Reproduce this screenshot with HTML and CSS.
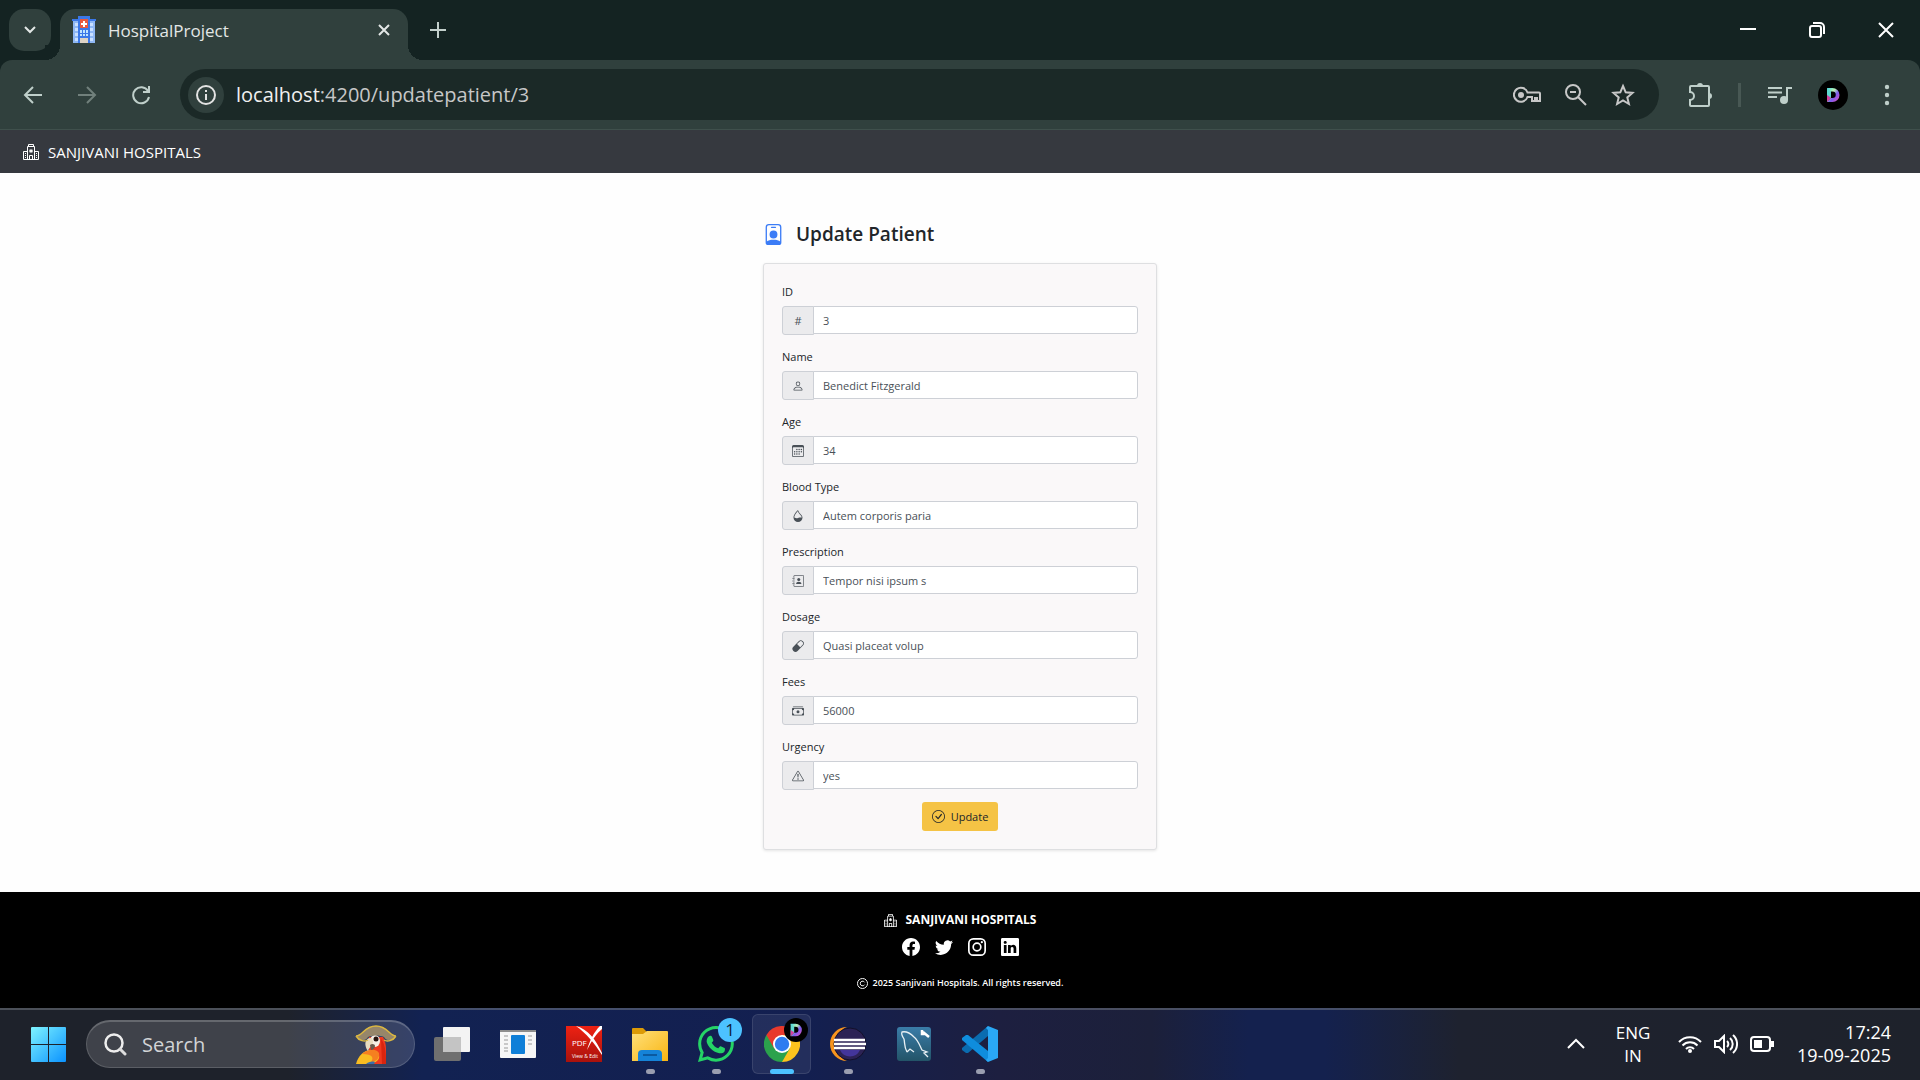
FILE: index.html
```html
<!DOCTYPE html>
<html lang="en">
<head>
<meta charset="utf-8">
<title>HospitalProject</title>
<link rel="stylesheet" href="styles.css">
</head>
<body>
<svg class="defs" aria-hidden="true">
  <symbol id="hospital" viewBox="0 0 16 16"><path d="M8.5 5.034v1.1l.953-.55.5.867L9 7l.953.55-.5.866-.953-.55v1.1h-1v-1.1l-.953.55-.5-.866L7 7l-.953-.55.5-.866.953.55v-1.1zM13 9h1v1h-1zM13 11h1v1h-1zM13 13h1v1h-1zM2 9h1v1H2zM2 11h1v1H2zM2 13h1v1H2z"/><path d="M5 1a1 1 0 0 1 1-1h4a1 1 0 0 1 1 1v1a1 1 0 0 1 1 1v4h3a1 1 0 0 1 1 1v7a1 1 0 0 1-1 1H1a1 1 0 0 1-1-1V8a1 1 0 0 1 1-1h3V3a1 1 0 0 1 1-1zm2 14h2v-3H7zm3 0h1V3H5v12h1v-3a1 1 0 0 1 1-1h2a1 1 0 0 1 1 1zm0-14H6v1h4zm2 7v7h3V8zm-8 7V8H1v7z"/></symbol>
  <symbol id="d-logo" viewBox="0 0 20 20">
    <linearGradient id="dg" x1="0" y1="0" x2="1" y2="1"><stop offset="0" stop-color="#3fd6e8"/><stop offset=".35" stop-color="#b9f0b0"/><stop offset=".6" stop-color="#7a5cf0"/><stop offset="1" stop-color="#f04fb0"/></linearGradient>
    <path d="M4 3h5.500a7 7 0 0 1 0 14H4l4-4h1.500a3 3 0 0 0 0-6.500H8L6 10z" fill="url(#dg)"/><path d="M4 3l4 3.500V13l-4 4z" fill="#5fd8d0"/><path d="M4 10l3 2 1 1-4 4z" fill="#d63fa0"/>
  </symbol>
</svg>

<header class="browser">
  <div class="tabstrip">
    <button class="tab-search" aria-label="Search tabs"><svg width="14" height="14" viewBox="0 0 14 14"><path class="line" d="M2 4l5 5 5-5"/></svg></button>
    <div class="tab">
      <svg width="24" height="28" viewBox="0 0 24 28"><path fill="#8fb8f5" d="M1 4h22v23H1z"/><path fill="#c9e0ff" d="M3 7h3v3H3zM3 12h3v3H3zM3 17h3v3H3zM3 22h3v3H3zM18 7h3v3h-3zM18 12h3v3h-3zM18 17h3v3h-3zM18 22h3v3h-3z"/><path fill="#3b78e8" d="M6 0h12v27H6zM0 3h24v2H0z"/><path fill="#e8593f" d="M8 3h8v9H8z"/><path fill="#fff" d="M11 5h2v2h2v2h-2v2h-2V9H9V7h2z"/><path fill="#bfe3ff" d="M8 14h2v3H8zM11 14h2v3h-2zM14 14h2v3h-2zM8 18h2v2H8zM11 18h2v2h-2zM14 18h2v2h-2z"/><path fill="#ddd3c5" d="M8 22h8v5H8z"/></svg>
      <span class="tab-title">HospitalProject</span>
      <button class="icon-btn" aria-label="Close tab"><svg width="14" height="14" viewBox="0 0 14 14"><path class="line" d="M2 2l10 10M12 2L2 12"/></svg></button>
    </div>
    <button class="icon-btn new-tab" aria-label="New tab"><svg width="16" height="16" viewBox="0 0 16 16"><path class="line" d="M8 0v16M0 8h16"/></svg></button>
    <div class="window-controls">
      <button class="icon-btn" aria-label="Minimize"><svg width="16" height="16" viewBox="0 0 16 16"><path class="line" d="M0 7h16"/></svg></button>
      <button class="icon-btn" aria-label="Restore"><svg width="16" height="16" viewBox="0 0 16 16"><rect class="line" x="1" y="4" width="11" height="11" rx="2"/><path class="line" d="M4 1h7a4 4 0 0 1 4 4v7"/></svg></button>
      <button class="icon-btn" aria-label="Close"><svg width="16" height="16" viewBox="0 0 16 16"><path class="line" d="M1 1l14 14M15 1L1 15"/></svg></button>
    </div>
  </div>
  <div class="toolbar">
    <button class="icon-btn nav" aria-label="Back"><svg width="20" height="20" viewBox="0 0 20 20"><path class="line" d="M19 10H2M10 2l-8 8 8 8"/></svg></button>
    <button class="icon-btn nav dim" aria-label="Forward"><svg width="20" height="20" viewBox="0 0 20 20"><path class="line" d="M1 10h17M10 2l8 8-8 8"/></svg></button>
    <button class="icon-btn nav" aria-label="Reload"><svg width="20" height="20" viewBox="0 0 20 20"><path class="line" d="M17 6a8 8 0 1 0 1 6M18 1v6h-6"/></svg></button>
    <div class="address">
      <button class="icon-btn info" aria-label="Site information"><svg width="20" height="20" viewBox="0 0 20 20"><circle class="line" cx="10" cy="10" r="9"/><path class="line" d="M10 9v6M10 5v2"/></svg></button>
      <p class="url"><span>localhost</span>:4200/updatepatient/3</p>
      <button class="icon-btn" aria-label="Passwords"><svg width="28" height="18" viewBox="0 0 28 18"><path class="line" d="M14.500 6.500H26a1 1 0 0 1 1 1V15h-3v-3h-2v3h-3v-4h-4.500a7 7 0 1 1 0-4.500z"/><circle cx="8" cy="9" r="3"/></svg></button>
      <button class="icon-btn" aria-label="Zoom"><svg width="22" height="22" viewBox="0 0 22 22"><circle class="line" cx="8" cy="8" r="7"/><path class="line" d="M13 13l8 8M5 8h6"/></svg></button>
      <button class="icon-btn" aria-label="Bookmark"><svg width="24" height="24" viewBox="0 0 24 24"><path class="line" d="M12 3l2.700 6.300 6.800.6-5.200 4.500 1.600 6.600-5.900-3.500L6.100 21l1.600-6.600L2.500 9.900l6.800-.6z"/></svg></button>
    </div>
    <button class="icon-btn ext" aria-label="Extensions"><svg width="26" height="26" viewBox="0 0 26 26"><path class="line" d="M4 4h16a1 1 0 0 1 1 1v18a1 1 0 0 1-1 1H3a1 1 0 0 1-1-1v-5a4 4 0 0 0 0-8V5a1 1 0 0 1 1-1z"/><path d="M9 4a3 3 0 0 1 6 0zM21 11a3 3 0 0 1 0 6z"/></svg></button>
    <span class="divider"></span>
    <button class="icon-btn music" aria-label="Media controls"><svg width="24" height="18" viewBox="0 0 24 18"><path class="line" d="M0 2h14M0 6.500h14M0 11h9M19 14V2h5"/><circle cx="16" cy="14" r="4"/></svg></button>
    <button class="icon-btn avatar" aria-label="Profile"><svg width="20" height="20"><use href="#d-logo"/></svg></button>
    <button class="icon-btn menu" aria-label="Menu"><svg width="6" height="22" viewBox="0 0 6 22"><circle cx="3" cy="3" r="2.200"/><circle cx="3" cy="11" r="2.200"/><circle cx="3" cy="19" r="2.200"/></svg></button>
  </div>
</header>

<nav class="navbar">
  <a href="#" class="brand"><svg width="16" height="16"><use href="#hospital"/></svg>SANJIVANI HOSPITALS</a>
</nav>

<main class="page">
  <section class="panel">
    <h1 class="heading"><svg width="21" height="21" viewBox="0 0 16 16"><path d="M6.500 2a.5.5 0 0 0 0 1h3a.5.5 0 0 0 0-1zM11 8a3 3 0 1 1-6 0 3 3 0 0 1 6 0"/><path d="M4.500 0A2.500 2.500 0 0 0 2 2.500V14a2 2 0 0 0 2 2h8a2 2 0 0 0 2-2V2.500A2.500 2.500 0 0 0 11.500 0zM3 2.500A1.500 1.500 0 0 1 4.500 1h7A1.500 1.500 0 0 1 13 2.500v10.795a4.200 4.200 0 0 0-.776-.492C11.392 12.387 10.063 12 8 12s-3.392.387-4.224.803a4.200 4.200 0 0 0-.776.492z"/></svg>Update Patient</h1>
    <form class="card">
      <div class="field"><label for="id">ID</label><div class="group"><span class="addon">#</span><input id="id" type="text" value="3"></div></div>
      <div class="field"><label for="name">Name</label><div class="group"><span class="addon"><svg width="12" height="12" viewBox="0 0 16 16"><path d="M8 8a3 3 0 1 0 0-6 3 3 0 0 0 0 6m2-3a2 2 0 1 1-4 0 2 2 0 0 1 4 0m4 8c0 1-1 1-1 1H3s-1 0-1-1 1-4 6-4 6 3 6 4m-1-.004c-.001-.246-.154-.986-.832-1.664C11.516 10.680 10.289 10 8 10s-3.516.68-4.168 1.332c-.678.678-.83 1.418-.832 1.664z"/></svg></span><input id="name" type="text" value="Benedict Fitzgerald"></div></div>
      <div class="field"><label for="age">Age</label><div class="group"><span class="addon"><svg width="12" height="12" viewBox="0 0 16 16"><path d="M14 0H2a2 2 0 0 0-2 2v12a2 2 0 0 0 2 2h12a2 2 0 0 0 2-2V2a2 2 0 0 0-2-2M1 3.857C1 3.384 1.448 3 2 3h12c.552 0 1 .384 1 .857v10.286c0 .473-.448.857-1 .857H2c-.552 0-1-.384-1-.857z"/><path d="M6.500 7a1 1 0 1 0 0-2 1 1 0 0 0 0 2m3 0a1 1 0 1 0 0-2 1 1 0 0 0 0 2m3 0a1 1 0 1 0 0-2 1 1 0 0 0 0 2m-9 3a1 1 0 1 0 0-2 1 1 0 0 0 0 2m3 0a1 1 0 1 0 0-2 1 1 0 0 0 0 2m3 0a1 1 0 1 0 0-2 1 1 0 0 0 0 2m3 0a1 1 0 1 0 0-2 1 1 0 0 0 0 2m-9 3a1 1 0 1 0 0-2 1 1 0 0 0 0 2m3 0a1 1 0 1 0 0-2 1 1 0 0 0 0 2m3 0a1 1 0 1 0 0-2 1 1 0 0 0 0 2"/></svg></span><input id="age" type="text" value="34"></div></div>
      <div class="field"><label for="blood">Blood Type</label><div class="group"><span class="addon"><svg width="12" height="12" viewBox="0 0 16 16"><path fill-rule="evenodd" d="M7.210.8C7.690.295 8 0 8 0q.164.544.371 1.038c.812 1.946 2.073 3.350 3.197 4.600C12.878 7.096 14 8.345 14 10a6 6 0 0 1-12 0C2 6.668 5.580 2.517 7.210.8m.413 1.021A31 31 0 0 0 5.794 3.990c-.726.95-1.436 2.008-1.960 3.070C3.304 8.133 3 9.138 3 10c0 0 2.500 1.500 5 .5s5-.5 5-.5c0-1.201-.796-2.157-2.181-3.700l-.03-.032C9.750 5.110 8.500 3.720 7.623 1.820z"/></svg></span><input id="blood" type="text" value="Autem corporis paria"></div></div>
      <div class="field"><label for="rx">Prescription</label><div class="group"><span class="addon"><svg width="12" height="12" viewBox="0 0 16 16"><path fill="none" stroke="currentColor" d="M2.500 3.500v-2a1 1 0 0 1 1-1h11a1 1 0 0 1 1 1v13a1 1 0 0 1-1 1h-11a1 1 0 0 1-1-1v-2M2.500 5.500v1M2.500 9.500v1M.5 4.500h3M.5 8h3M.5 11.500h3"/><circle cx="9" cy="6" r="2"/><path d="M5.500 12c0-2 1.500-3 3.500-3s3.500 1 3.500 3z"/></svg></span><input id="rx" type="text" value="Tempor nisi ipsum s"></div></div>
      <div class="field"><label for="dose">Dosage</label><div class="group"><span class="addon"><svg width="12" height="12" viewBox="0 0 16 16"><path d="M1.828 8.900 8.900 1.827a4 4 0 1 1 5.657 5.657l-7.070 7.071A4 4 0 1 1 1.827 8.900Zm9.128.771 2.893-2.893a3 3 0 1 0-4.243-4.242L6.713 5.429z"/></svg></span><input id="dose" type="text" value="Quasi placeat volup"></div></div>
      <div class="field"><label for="fees">Fees</label><div class="group"><span class="addon"><svg width="12" height="12" viewBox="0 0 16 16"><path d="M1 3a1 1 0 0 1 1-1h12a1 1 0 0 1 1 1zm7 8a2 2 0 1 0 0-4 2 2 0 0 0 0 4"/><path d="M0 5a1 1 0 0 1 1-1h14a1 1 0 0 1 1 1v8a1 1 0 0 1-1 1H1a1 1 0 0 1-1-1zm3 0a2 2 0 0 1-2 2v4a2 2 0 0 1 2 2h10a2 2 0 0 1 2-2V7a2 2 0 0 1-2-2z"/></svg></span><input id="fees" type="text" value="56000"></div></div>
      <div class="field"><label for="urgency">Urgency</label><div class="group"><span class="addon"><svg width="12" height="12" viewBox="0 0 16 16"><path d="M7.938 2.016A.13.13 0 0 1 8.002 2a.13.13 0 0 1 .063.016.15.15 0 0 1 .054.057l6.857 11.667c.036.06.035.124.002.183a.2.2 0 0 1-.054.06.1.1 0 0 1-.066.017H1.146a.1.1 0 0 1-.066-.017.2.2 0 0 1-.054-.06.18.18 0 0 1 .002-.183L7.884 2.073a.15.15 0 0 1 .054-.057m1.044-.45a1.130 1.130 0 0 0-1.960 0L.165 13.233c-.457.778.091 1.767.98 1.767h13.713c.889 0 1.438-.99.98-1.767z"/><path d="M7.002 12a1 1 0 1 1 2 0 1 1 0 0 1-2 0M7.100 5.995a.905.905 0 1 1 1.800 0l-.35 3.507a.552.552 0 0 1-1.100 0z"/></svg></span><input id="urgency" type="text" value="yes"></div></div>
      <button class="submit" type="button"><svg width="13" height="13" viewBox="0 0 16 16"><path d="M8 15A7 7 0 1 1 8 1a7 7 0 0 1 0 14m0 1A8 8 0 1 0 8 0a8 8 0 0 0 0 16"/><path d="m10.970 4.970-.02.022-3.473 4.425-2.093-2.094a.75.75 0 0 0-1.060 1.060L6.970 11.030a.75.75 0 0 0 1.079-.02l3.992-4.990a.75.75 0 0 0-1.071-1.050"/></svg>Update</button>
    </form>
  </section>
</main>

<footer class="footer">
  <p class="footer-title"><svg width="13" height="13"><use href="#hospital"/></svg>SANJIVANI HOSPITALS</p>
  <div class="social">
    <a href="#" aria-label="Facebook"><svg width="18" height="18" viewBox="0 0 16 16"><path d="M16 8.049c0-4.446-3.582-8.050-8-8.050C3.580 0-.002 3.603-.002 8.050c0 4.017 2.926 7.347 6.750 7.951v-5.625h-2.030V8.050H6.750V6.275c0-2.017 1.195-3.131 3.022-3.131.876 0 1.791.157 1.791.157v1.980h-1.009c-.993 0-1.303.621-1.303 1.258v1.510h2.218l-.354 2.326H9.250V16c3.824-.604 6.750-3.934 6.750-7.951"/></svg></a>
    <a href="#" aria-label="Twitter"><svg width="18" height="18" viewBox="0 0 16 16"><path d="M5.026 15c6.038 0 9.341-5.003 9.341-9.334q.002-.211-.006-.422A6.700 6.700 0 0 0 16 3.542a6.700 6.700 0 0 1-1.889.518 3.300 3.300 0 0 0 1.447-1.817 6.500 6.500 0 0 1-2.087.793A3.286 3.286 0 0 0 7.875 6.030a9.320 9.320 0 0 1-6.767-3.429 3.290 3.290 0 0 0 1.018 4.382A3.300 3.300 0 0 1 .64 6.575v.045a3.290 3.290 0 0 0 2.632 3.218 3.200 3.200 0 0 1-.865.115 3 3 0 0 1-.614-.057 3.280 3.280 0 0 0 3.067 2.277A6.600 6.600 0 0 1 .78 13.580a6 6 0 0 1-.78-.045A9.340 9.340 0 0 0 5.026 15"/></svg></a>
    <a href="#" aria-label="Instagram"><svg width="18" height="18" viewBox="0 0 16 16"><rect x=".75" y=".75" width="14.500" height="14.500" rx="4" fill="none" stroke="currentColor" stroke-width="1.500"/><circle cx="8" cy="8" r="3.400" fill="none" stroke="currentColor" stroke-width="1.500"/><circle cx="12.300" cy="3.700" r="1"/></svg></a>
    <a href="#" aria-label="LinkedIn"><svg width="18" height="18" viewBox="0 0 16 16"><path d="M0 1.146C0 .513.526 0 1.175 0h13.650C15.474 0 16 .513 16 1.146v13.708c0 .633-.526 1.146-1.175 1.146H1.175C.526 16 0 15.487 0 14.854zm4.943 12.248V6.169H2.542v7.225zm-1.200-8.212c.837 0 1.358-.554 1.358-1.248-.015-.709-.52-1.248-1.342-1.248S2.400 3.226 2.400 3.934c0 .694.521 1.248 1.327 1.248zm4.908 8.212V9.359c0-.216.016-.432.08-.586.173-.431.568-.878 1.232-.878.869 0 1.216.662 1.216 1.634v3.865h2.401V9.250c0-2.220-1.184-3.252-2.764-3.252-1.274 0-1.845.7-2.165 1.193V6.169h-2.400c.03.678 0 7.225 0 7.225z"/></svg></a>
  </div>
  <p class="copyright"><svg width="11" height="11" viewBox="0 0 16 16"><circle cx="8" cy="8" r="7.300" fill="none" stroke="currentColor" stroke-width="1.400"/><path fill="none" stroke="currentColor" stroke-width="1.400" d="M11 6.300A3.300 3.300 0 0 0 4.800 8a3.300 3.300 0 0 0 6.200 1.700"/></svg>2025 Sanjivani Hospitals. All rights reserved.</p>
</footer>

<div class="taskbar">
  <button class="start" aria-label="Start"><svg width="35" height="35" viewBox="0 0 35 35"><linearGradient id="wg" x1="0" y1="0" x2="35" y2="35" gradientUnits="userSpaceOnUse"><stop offset="0" stop-color="#7ff4ff"/><stop offset="1" stop-color="#0a92ff"/></linearGradient><path fill="url(#wg)" d="M1 0h16v17H0V1a1 1 0 0 1 1-1zM18 0h16a1 1 0 0 1 1 1v16H18zM0 18h17v17H1a1 1 0 0 1-1-1zM18 18h17v16a1 1 0 0 1-1 1H18z"/></svg></button>
  <button class="search">
    <svg width="23" height="23" viewBox="0 0 23 23"><circle cx="10" cy="10" r="8.500" fill="none" stroke="#eee" stroke-width="2.500"/><path d="M16 16l5 5" stroke="#ddd" stroke-width="3" stroke-linecap="round"/></svg>
    <span>Search</span>
    <svg width="42" height="40" viewBox="0 0 42 40"><path fill="#ee3a1f" d="M14 12h14c2 3 3 8 3 12v15H14V28z"/><path fill="#d8250f" d="M26 14c4 5 5 12 5 25h-4z"/><path fill="#f9bd22" d="M1 39c2-8 8-14 15-14 6 0 9 4 8 8-2 5-7 6-14 6z"/><path fill="#f58020" d="M7 29c5-5 14-6 17-1 1 5-3 9-8 9 3-4 2-8-9-8z"/><path fill="#3b6fa8" d="M11 39c2-2 6-3 9-2l-1 2z"/><ellipse cx="20" cy="16" rx="5" ry="6" fill="#f6eee4"/><circle cx="21" cy="14" r="2.500" fill="#26130f"/><path fill="#e9dcc0" d="M17 13c-8-1-8 8-4 13 1-4 5-5 5-9z"/><path fill="#6b5a4c" d="M15 20c2-2 5-1 5 1 0 2-2 4-4 4z"/><path fill="#96866a" d="M1 11c7 0 8-10 20-10s13 10 20 10c-3 5-9 6-12 1-4-2-12-2-16 0-3 5-9 4-12-1z"/><path fill="none" stroke="#dcb840" stroke-width="1.500" d="M1 11c7 0 8-10 20-10s13 10 20 10M1 11c3 5 9 6 12 4M41 11c-3 5-9 6-12 4"/></svg>
  </button>
  <div class="apps">
    <button class="app" aria-label="Task view"><svg width="36" height="36" viewBox="0 0 36 36"><rect y="11" width="27" height="24" rx="2" fill="#6f6f6f"/><rect x="9" y="1" width="27" height="25" rx="1" fill="#f3f3f3"/><path fill="#c4c4c4" d="M9 11h18v15H9z"/></svg></button>
    <button class="app" aria-label="Reader"><svg width="36" height="36" viewBox="0 0 36 36"><rect y="4" width="36" height="28" rx="1" fill="#f6f6f6"/><path fill="#8d8d8d" d="M0 4h36v2H0z"/><rect x="11" y="9" width="14" height="19" rx="1" fill="#0f7fd8"/><path stroke="#c8c8c8" stroke-width="2" d="M4 10h4M4 14h4M4 18h4M4 22h4M4 25h4M28 10h4M28 14h4M28 18h4"/></svg></button>
    <button class="app" aria-label="PDF X"><svg width="36" height="36" viewBox="0 0 36 36"><linearGradient id="pg" x2="0" y2="1"><stop offset="0" stop-color="#ee2213"/><stop offset="1" stop-color="#a9120c"/></linearGradient><path fill="url(#pg)" d="M0 0h36v36H0z"/><path fill="#fff" d="M10 0c12 3 20 14 26 27v2C29 18 20 7 10 0zM34 0h2v3C31 7 26 14 21 24 24 14 28 6 34 0z"/><text x="6" y="20" font-size="8" fill="#fff">PDF</text><text x="6" y="32" font-size="5" fill="#fff">View &amp; Edit</text></svg></button>
    <button class="app open" aria-label="File Explorer"><svg width="36" height="36" viewBox="0 0 36 36"><linearGradient id="fg" x2="1" y2="1"><stop offset="0" stop-color="#ffe07a"/><stop offset="1" stop-color="#f9b512"/></linearGradient><path fill="#dc9a06" d="M0 3a1 1 0 0 1 1-1h10l4 4v6H0z"/><path fill="url(#fg)" d="M0 8h11l4-3h20a1 1 0 0 1 1 1v29H0z"/><path fill="#1583d8" d="M6 35v-7a4 4 0 0 1 4-4h16a4 4 0 0 1 4 4v7z"/><path stroke="#0b5aa0" stroke-width="2" d="M11 29h14"/></svg></button>
    <button class="app open" aria-label="WhatsApp"><svg width="36" height="36" viewBox="0 0 16 16"><path fill="#25d366" fill-rule="evenodd" d="M13.601 2.326A7.850 7.850 0 0 0 7.994 0C3.627 0 .068 3.558.064 7.926c0 1.399.366 2.760 1.057 3.965L0 16l4.204-1.102a7.900 7.900 0 0 0 3.790.965h.004c4.368 0 7.926-3.558 7.930-7.930A7.900 7.900 0 0 0 13.600 2.326zM7.994 14.521a6.600 6.600 0 0 1-3.356-.92l-.24-.144-2.494.654.666-2.433-.156-.251a6.560 6.560 0 0 1-1.007-3.505c0-3.626 2.957-6.584 6.591-6.584a6.560 6.560 0 0 1 4.660 1.931 6.560 6.560 0 0 1 1.928 4.660c-.004 3.639-2.961 6.592-6.592 6.592"/><path fill="#25d366" d="M5.500 4.300c.4 0 .5.100.7.500l.6 1.400c.1.300-.2.700-.7 1.200.7 1.200 1.600 2 2.900 2.500.6-.7.700-1 1.100-.9l1.700.8c.3.200.2 1.100-.1 1.600-.5.600-1.400.9-2.300.7-2.700-.6-4.900-2.700-5.500-4.900-.2-1.200.5-2.900 1.600-2.900z"/></svg><span class="badge">1</span></button>
    <button class="app open active" aria-label="Chrome"><svg width="36" height="36" viewBox="0 0 36 36"><path fill="#e8392c" d="M2.400 9a18 18 0 0 1 31.200 0L18 18z"/><path fill="#fcc31e" d="M33.600 9A18 18 0 0 1 18 36l0-18 0-9z"/><path fill="#2ba24c" d="M2.400 9A18 18 0 0 0 18 36l7.800-13.500L18 18z"/><path fill="#e8392c" d="M2.400 9l7.800 13.500L18 9h15.600L18 5z"/><circle cx="18" cy="18" r="9" fill="#fff"/><circle cx="18" cy="18" r="7.200" fill="#2f7cf0"/></svg><span class="profile"><svg width="18" height="18"><use href="#d-logo"/></svg></span></button>
    <button class="app open" aria-label="Eclipse"><svg width="36" height="36" viewBox="0 0 36 36"><path fill="#f8941e" d="M17 1a17 17 0 0 0 0 34C4 31 4 5 17 1z"/><circle cx="20" cy="18" r="16" fill="#2c2255" stroke="#12102a"/><path fill="#43359a" d="M10 24h20a11 11 0 0 1-20 0z"/><path stroke="#fff" stroke-width="2.400" d="M4 14h31M4 18h32M4 22h31"/></svg></button>
    <button class="app" aria-label="MySQL Workbench"><svg width="36" height="36" viewBox="0 0 36 36"><linearGradient id="mg" x2="0" y2="1"><stop offset="0" stop-color="#3a7ca8"/><stop offset="1" stop-color="#235468"/></linearGradient><rect x="1" y="1" width="34" height="34" rx="3" fill="url(#mg)"/><path fill="none" stroke="#e8f0f4" stroke-width="1.300" d="M11 26c-3-5-2-9-3-13-2-3-3-5-2-7 4-1 8 1 12 5 4 3 6 9 8 13l5 2-3 1 4 4M11 26l3-3 4 3"/><path stroke="#fff" stroke-width="2.500" d="M27 6l6 5M26 4v4h3"/></svg></button>
    <button class="app open" aria-label="Visual Studio Code"><svg width="36" height="36" viewBox="0 0 36 36"><path fill="#0a6cb0" d="M26 0v10L6 27l-2 0-4-3v-2z"/><path fill="#0f8ddd" d="M0 12l4-3h2l20 16v11L0 14z"/><path fill="#2aa8f5" d="M26 0l10 4v28l-10 4-2-2 2-2V4l-2-2z"/></svg></button>
  </div>
  <div class="tray">
    <button class="icon-btn chevron" aria-label="Show hidden icons"><svg width="18" height="12" viewBox="0 0 18 12"><path class="line" d="M1 10l8-8 8 8"/></svg></button>
    <button class="lang">ENG<br>IN</button>
    <button class="status" aria-label="Network, volume and battery">
      <svg width="24" height="20" viewBox="0 0 24 20"><path class="line" d="M1 8a15 15 0 0 1 22 0M4.500 11.500a10.500 10.500 0 0 1 15 0M8 15a5.500 5.500 0 0 1 8 0"/><circle cx="12" cy="17" r="2"/></svg>
      <svg width="24" height="20" viewBox="0 0 24 20"><path class="line" d="M1 7h4l5-5v16l-5-5H1zM13 7a4 4 0 0 1 0 6M16 4a8 8 0 0 1 0 12M19 1a12 12 0 0 1 0 18"/></svg>
      <svg width="24" height="20" viewBox="0 0 24 20"><rect class="line" x="1" y="3" width="19" height="14" rx="3"/><path d="M4 6h8v8H4zM21 7h3v6h-3z"/></svg>
    </button>
    <button class="clock">17:24<br>19-09-2025</button>
  </div>
</div>
</body>
</html>
```
FILE: styles.css
```css
* { box-sizing: border-box; }

body {
  margin: 0;
  min-height: 100vh;
  display: flex;
  flex-direction: column;
  background: #fefefe;
  color: #212529;
  font-family: "Open Sans", "Noto Sans", sans-serif;
  font-size: 11px;
  line-height: 20px;
}

svg { display: block; flex: none; fill: currentColor; }
.defs { position: absolute; width: 0; height: 0; }
.line { fill: none; stroke: currentColor; stroke-width: 2; }
p, h1 { margin: 0; }
button { border: 0; padding: 0; background: none; color: inherit; font: inherit; }
.icon-btn { display: flex; align-items: center; justify-content: center; }

/* Browser window */
.browser { background: #142322; color: #e3e7e6; }
.tabstrip { display: flex; height: 60px; padding: 9px 0 0 9px; }
.tab-search {
  display: flex;
  align-items: center;
  justify-content: center;
  width: 42px;
  height: 42px;
  margin-right: 9px;
  border-radius: 15px;
  background: #30403d;
}
.tab {
  position: relative;
  display: flex;
  align-items: center;
  gap: 12px;
  width: 348px;
  padding: 0 17px 9px 12px;
  border-radius: 15px 15px 0 0;
  background: #30403d;
}
.tab::before, .tab::after {
  content: "";
  position: absolute;
  bottom: 0;
  width: 15px;
  height: 15px;
}
.tab::before { right: 100%; background: radial-gradient(circle at 0 0, #142322 15px, #30403d 15px); }
.tab::after { left: 100%; background: radial-gradient(circle at 100% 0, #142322 15px, #30403d 15px); }
.tab-title { flex: 1; padding-top: 2px; font-size: 17px; line-height: 24px; }
.new-tab { width: 60px; height: 42px; color: #c3d0cc; }
.window-controls { display: flex; height: 42px; margin-left: auto; color: #fff; }
.window-controls .icon-btn { width: 69px; }

.toolbar {
  display: flex;
  align-items: center;
  height: 70px;
  padding: 0 18px 0 6px;
  border-bottom: 1px solid #3f504c;
  border-radius: 12px 12px 0 0;
  background: #30403d;
  color: #bfcfca;
}
.nav { width: 54px; height: 42px; }
.dim { color: #71807c; }
.address {
  flex: 1;
  display: flex;
  align-items: center;
  gap: 24px;
  height: 51px;
  margin-left: 12px;
  padding: 0 24px 0 8px;
  border-radius: 26px;
  background: #1b2927;
  color: #c7c7c7;
}
.info { width: 36px; height: 36px; border-radius: 50%; background: #30403d; color: #e3e3e3; }
.url { flex: 1; margin-left: -12px; font-size: 20px; line-height: 28px; }
.url span { color: #f0f0f0; }
.ext { width: 60px; margin-left: 12px; }
.divider { width: 3px; height: 24px; margin: 0 7px; background: #485854; }
.music { width: 64px; }
.avatar { width: 30px; height: 30px; margin: 0 6px; border-radius: 50%; background: #000; }
.menu { width: 30px; margin-left: 18px; }

/* Site */
.navbar { display: flex; height: 43px; padding: 0 23px; background: #36393f; }
.brand { display: flex; align-items: center; gap: 9px; color: #fff; font-size: 15px; text-decoration: none; }

.page { flex: 1; display: flex; justify-content: center; padding: 48px 24px 42px; }
.panel { width: 394px; }
.heading {
  display: flex;
  align-items: center;
  gap: 12px;
  margin-bottom: 16px;
  font-size: 19px;
  font-weight: 600;
  line-height: 26px;
}
.heading svg { color: #3b7cf6; }
.card {
  padding: 18px;
  border: 1px solid #dedfe1;
  border-radius: 3px;
  background: #faf8f9;
  box-shadow: 0 1px 3px rgba(0, 0, 0, .1);
}
.field { display: flex; flex-direction: column; gap: 4px; margin-bottom: 12px; }
.group { display: flex; align-items: flex-start; color: #495057; }
.addon {
  display: flex;
  align-items: center;
  justify-content: center;
  width: 32px;
  height: 29px;
  border: 1px solid #cdd0d6;
  border-radius: 3px 0 0 3px;
  background: #ebebed;
}
.group input {
  flex: 1;
  min-width: 0;
  height: 28px;
  margin-left: -1px;
  padding: 0 9px;
  border: 1px solid #cdd0d6;
  border-radius: 0 3px 3px 0;
  background: #fff;
  color: inherit;
  font: inherit;
}
.submit {
  display: flex;
  align-items: center;
  gap: 6px;
  height: 29px;
  margin: 0 auto;
  padding: 0 10px;
  border-radius: 3px;
  background: #f5c345;
}

.footer {
  display: flex;
  flex-direction: column;
  align-items: center;
  height: 116px;
  padding-top: 18px;
  background: #000;
  color: #fff;
}
.footer-title, .copyright { display: flex; align-items: center; }
.footer-title { gap: 9px; font-size: 12px; font-weight: 700; }
.social { display: flex; gap: 15px; margin: 8px 0 17px; }
.social a { color: inherit; }
.copyright { gap: 5px; font-size: 9px; font-weight: 600; }

/* Taskbar */
.taskbar {
  display: flex;
  align-items: center;
  height: 72px;
  padding: 0 29px 2px 31px;
  border-top: 2px solid rgba(120, 125, 135, .5);
  background: linear-gradient(90deg, #1e222b 0, #1e222b 15%, #122252 22%, #131f50 42%, #1d1f40 52%, #1c203a 60%, #14214e 65%, #14214e 69%, #1e222f 76%, #1e222b 100%);
  background-origin: border-box;
  color: #fff;
}
.start { margin-right: 20px; }
.search {
  display: flex;
  align-items: center;
  gap: 15px;
  width: 329px;
  height: 48px;
  padding: 0 17px;
  border: 1px solid rgba(255, 255, 255, .15);
  border-top: 2px solid rgba(255, 255, 255, .2);
  border-radius: 24px;
  background: rgba(255, 255, 255, .15);
  color: #d2d4d6;
  font-size: 20px;
  line-height: 28px;
  text-align: left;
}
.search span { flex: 1; }
.apps { display: flex; margin-left: 4px; }
.app {
  position: relative;
  display: flex;
  align-items: center;
  justify-content: center;
  width: 66px;
  height: 60px;
}
.open::after {
  content: "";
  position: absolute;
  left: 50%;
  bottom: 0;
  width: 9px;
  height: 5px;
  margin-left: -4px;
  border-radius: 3px;
  background: #9a9eb0;
}
.active::after { width: 24px; margin-left: -12px; background: #4cc2ff; }
.active::before {
  content: "";
  position: absolute;
  inset: 0 4px 0 3px;
  border: 1px solid rgba(255, 255, 255, .1);
  border-radius: 6px;
  background: rgba(255, 255, 255, .07);
}
.active > svg { position: relative; }
.badge, .profile {
  position: absolute;
  top: 4px;
  left: 35px;
  width: 24px;
  height: 24px;
  border-radius: 50%;
}
.badge { background: #4cc2ff; color: #10203a; font-size: 17px; line-height: 24px; }
.profile { display: flex; align-items: center; justify-content: center; background: #000; }
.tray { display: flex; align-items: center; margin-left: auto; font-size: 17px; line-height: 23px; }
.chevron { width: 42px; }
.lang { width: 72px; }
.status { display: flex; gap: 12px; margin: 0 12px 0 9px; }
.clock { width: 105px; font-size: 18px; text-align: right; }
```
